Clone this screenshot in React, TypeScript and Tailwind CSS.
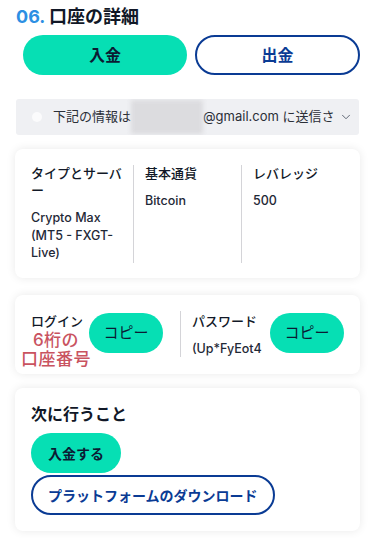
import { ChevronDown } from 'lucide-react';

const font = { fontFamily: '"Inter", "Noto Sans CJK JP", sans-serif' };

function CopyButton() {
  return (
    <button className="w-[74px] h-10 shrink-0 rounded-full bg-[#06dfb4] text-[15px] text-[#0b1b33] flex items-center justify-center">
      コピー
    </button>
  );
}

export default function App() {
  return (
    <div className="w-[375px] min-h-[538px] bg-white text-[#111827]" style={font}>
      <h2 className="pl-4 pt-[5px] text-[18px] leading-6 font-bold">
        <span className="text-[#2d8fe3]">06.</span> 口座の詳細
      </h2>

      <div className="flex gap-2 pl-[23px] pr-[15px] mt-[6px]">
        <button className="w-[164px] h-10 rounded-full bg-[#06dfb4] text-[16px] font-bold text-[#0b1b33]">
          入金
        </button>
        <button className="w-[165px] h-10 rounded-full border-2 border-[#0a3b94] text-[16px] font-bold text-[#0a3b94]">
          出金
        </button>
      </div>

      {/* email notice */}
      <div className="mx-4 mt-6 h-9 bg-[#eff0f3] rounded-[3px] flex items-center pl-[16px] overflow-hidden">
        <span className="w-[10px] h-[10px] rounded-full bg-[#fbfbfc] shrink-0" />
        <div className="ml-[11px] w-[276px] whitespace-nowrap text-[13px] text-[#2b2f38] flex items-center">
          <span>下記の情報は</span>
          <span className="inline-block w-[72px] h-[34px] bg-[#dcdcdf] blur-[2px] shrink-0" />
          <span>@gmail.com に送信さ</span>
        </div>
        <ChevronDown className="w-[14px] h-[14px] text-[#4b5563] ml-[10px] shrink-0" strokeWidth={1.5} />
      </div>

      {/* account details */}
      <div className="mx-[15px] mt-[14px] bg-white rounded-lg shadow-[0_0_10px_rgba(0,0,0,0.09)] pt-4 pb-[15px] px-4 flex">
        <div className="w-[102px] pr-2">
          <p className="text-[13px] leading-[17px] font-medium">タイプとサーバ<br />ー</p>
          <p className="mt-[10px] text-[12.5px] leading-[17.5px] font-medium text-[#1f2937]">
            Crypto Max<br />(MT5 - FXGT-<br />Live)
          </p>
        </div>
        <div className="w-[108px] border-l border-[#d4d4d8] pl-[11px] h-[98px]">
          <p className="text-[13px] leading-[17px] font-medium">基本通貨</p>
          <p className="mt-[10px] text-[12.5px] leading-[17px] font-medium text-[#1f2937]">Bitcoin</p>
        </div>
        <div className="flex-1 border-l border-[#d4d4d8] pl-[11px] h-[98px]">
          <p className="text-[13px] leading-[17px] font-medium">レバレッジ</p>
          <p className="mt-[10px] text-[12.5px] leading-[17px] font-medium text-[#1f2937]">500</p>
        </div>
      </div>

      {/* login / password */}
      <div className="relative mx-[15px] mt-[17px] bg-white rounded-lg shadow-[0_0_10px_rgba(0,0,0,0.09)] pt-[18px] pb-[17px] px-4 flex items-start">
        <div className="w-[149px] pr-[17px] flex justify-between items-start">
          <p className="text-[13px] leading-[17px] font-medium">ログイン</p>
          <CopyButton />
        </div>
        <div className="w-px h-[46px] -mt-[2px] bg-[#d4d4d8]" />
        <div className="flex-1 pl-[11px] flex justify-between items-start">
          <div>
            <p className="text-[13px] leading-[17px] font-medium">パスワード</p>
            <p className="mt-[10px] text-[12.5px] leading-[17px] font-medium text-[#1f2937]">(Up*FyEot4</p>
          </div>
          <CopyButton />
        </div>
        <p className="absolute left-[6px] top-[36px] w-[70px] text-center text-[17px] leading-[19px] font-medium text-[#c9535f] tracking-[0.5px] [text-shadow:0_0_4px_#fff,0_0_6px_#fff]">
          6桁の<br />口座番号
        </p>
      </div>

      {/* next steps */}
      <div className="mx-[15px] mt-[14px] bg-white rounded-lg shadow-[0_0_10px_rgba(0,0,0,0.09)] pt-[15px] pb-[16px] px-4">
        <h3 className="text-[16px] leading-[22px] font-bold">次に行うこと</h3>
        <div className="mt-2 flex flex-col items-start gap-[2px]">
          <button className="h-10 px-[17px] rounded-full bg-[#06dfb4] text-[14px] font-semibold text-[#0b1b33]">
            入金する
          </button>
          <button className="h-10 px-[15px] rounded-full border-2 border-[#0a3b94] text-[14px] font-semibold text-[#0a3b94]">
            プラットフォームのダウンロード
          </button>
        </div>
      </div>
    </div>
  );
}
